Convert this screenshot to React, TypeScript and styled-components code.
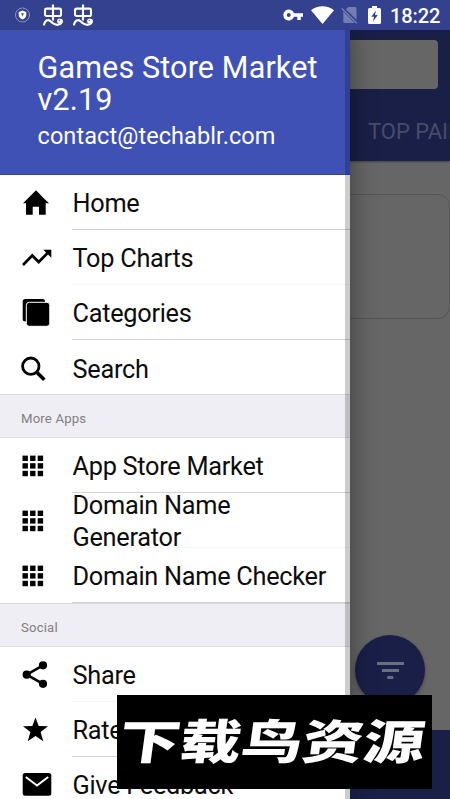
import React from "react";
import styled, { createGlobalStyle } from "styled-components";

const GlobalStyle = createGlobalStyle`
  * { box-sizing: border-box; }
  body { margin: 0; background: #666; overflow: hidden; }
`;

const Screen = styled.div`
  position: relative;
  width: 450px;
  height: 799px;
  overflow: hidden;
  background: #666;
  font-family: Roboto, "Noto Sans", sans-serif;
  display: flex;
  flex-direction: column;
`;

const StatusBar = styled.header`
  display: flex;
  align-items: center;
  justify-content: space-between;
  flex: none;
  height: 30px;
  padding: 0 10px 0 14px;
  background: #34418f;
  color: #fff;
`;
const StatusGroup = styled.div`
  display: flex;
  align-items: center;
`;
const StatusIcon = styled.svg<{ $gap?: number }>`
  display: block;
  flex: none;
  margin-right: ${(p) => p.$gap ?? 0}px;
`;
const Clock = styled.span`
  font-size: 20px;
  line-height: 30px;
  font-weight: 500;
  width: 50px;
  letter-spacing: -0.1px;
  white-space: nowrap;
  padding-top: 1px;
`;

const Toolbar = styled.div`
  flex: none;
  height: 131px;
  background: #191f47;
  display: flex;
  flex-direction: column;
  align-items: flex-end;
  justify-content: space-between;
  padding: 10px 0 0;
  box-shadow: 0 1px 2px rgba(0, 0, 0, 0.35);
`;
const SearchField = styled.div`
  width: 426px;
  height: 49px;
  margin-right: 12px;
  border-radius: 4px;
  background: #666;
`;
const Tab = styled.div`
  width: 82px;
  height: 60px;
  line-height: 62px;
  font-size: 22px;
  color: #474c6c;
  white-space: nowrap;
  overflow: hidden;
`;
const Content = styled.main`
  flex: 1;
  padding: 33px 0 0;
`;
const Card = styled.div`
  height: 125px;
  border: 1px solid #545454;
  border-radius: 12px;
`;
const BottomBar = styled.footer`
  flex: none;
  height: 69px;
  background: #191f47;
`;
const Fab = styled.button`
  position: absolute;
  left: 355px;
  top: 635px;
  width: 70px;
  height: 70px;
  padding: 0;
  border: 0;
  border-radius: 50%;
  background: #191f47;
  box-shadow: 0 2px 4px rgba(0, 0, 0, 0.3);
`;

const Drawer = styled.aside`
  position: absolute;
  left: 0;
  top: 30px;
  width: 350px;
  height: 769px;
  background: #fff;
  box-shadow: 0 0 24px rgba(0, 0, 0, 0.42);
  clip-path: inset(0 -40px 0 0);
`;
const DrawerEdge = styled.div`
  position: absolute;
  inset: 0 0 0 auto;
  width: 5px;
  background: rgba(0, 0, 0, 0.2);
`;
const DrawerHeader = styled.div`
  height: 145px;
  padding: 22px 0 0 37.5px;
  background: #3f51b5;
  border-bottom: 1px solid #34439c;
  color: #fff;
`;
const Title = styled.h1`
  margin: 0;
  font-size: 30.5px;
  font-weight: 400;
  line-height: 31.5px;
  letter-spacing: 0.15px;
`;
const Email = styled.p`
  margin: 7px 0 0;
  font-size: 23.5px;
  line-height: 28px;
  letter-spacing: 0.08px;
`;
const Section = styled.h2<{ $h: number }>`
  margin: 0;
  height: ${(p) => p.$h}px;
  padding-left: 21px;
  font-size: 13.2px;
  font-weight: 400;
  line-height: 47px;
  letter-spacing: 0.15px;
  color: #808080;
  background: #efeef5;
  border-top: 1px solid #d9d9dc;
  border-bottom: 1px solid #dedee2;
`;
const Row = styled.div<{ $h: number }>`
  display: flex;
  height: ${(p) => p.$h}px;
  padding-left: 20px;
`;
const RowIcon = styled.svg`
  flex: none;
  width: 32px;
  height: 32px;
  margin: 11px 20px 0 0;
`;
const RowLabel = styled.div<{ $line: string; $dy: number }>`
  flex: 1;
  display: flex;
  align-items: center;
  padding-top: ${(p) => p.$dy}px;
  padding-left: 0.5px;
  font-size: 25.3px;
  line-height: 32px;
  letter-spacing: -0.27px;
  color: #0c0c0c;
  border-bottom: 1px solid ${(p) => p.$line};
`;
const LabelText = styled.span<{ $wrap?: boolean }>`
  max-width: ${(p) => (p.$wrap ? "200px" : "none")};
  white-space: ${(p) => (p.$wrap ? "normal" : "nowrap")};
`;

const Banner = styled.div`
  position: absolute;
  left: 117px;
  top: 695px;
  width: 315px;
  height: 94px;
  background: #000;
  color: #fff;
  display: flex;
  align-items: center;
  justify-content: center;
  overflow: hidden;
`;
const BannerText = styled.span`
  font-family: "Noto Sans CJK SC", sans-serif;
  font-weight: 900;
  font-size: 47px;
  line-height: 94px;
  white-space: nowrap;
  transform: translate(-2px, -3px) scaleX(1.3) skewX(-6deg);
`;

type IconName = "home" | "trend" | "stack" | "search" | "grid" | "share" | "star" | "mail";

const drawings: Record<IconName, React.ReactNode> = {
  home: <path d="M16 4.3 3 17.3h3v11.4h6.7v-8H19v8h6.7V17.3h3.4L24 12.4z" />,
  trend: (
    <>
      <path d="m3 24 9.2-9.5 6.5 6.5 9.5-9.6" fill="none" stroke="#000" strokeWidth="2.7" />
      <path d="M23.3 8.8h8v8z" />
    </>
  ),
  stack: (
    <>
      <rect x="2.7" y="3" width="22.3" height="22.5" rx="2.5" />
      <rect x="6.3" y="6.3" width="23.5" height="24" rx="3" stroke="#fff" strokeWidth="1" />
    </>
  ),
  search: (
    <g fill="none" stroke="#000" strokeWidth="2.8">
      <circle cx="10.8" cy="15.2" r="8.2" />
      <path d="m16.3 20.7 8 8" strokeWidth="3.6" />
    </g>
  ),
  grid: (
    <>
      {[0, 1, 2].flatMap((r) =>
        [0, 1, 2].map((c) => (
          <rect key={`${r}${c}`} x={2.5 + c * 7.6} y={6.6 + r * 7.6} width="5.4" height="5.4" />
        ))
      )}
    </>
  ),
  share: (
    <>
      <path d="M23 7.3 6.7 16.7 23 25.8" fill="none" stroke="#000" strokeWidth="2.6" />
      <circle cx="23" cy="7.3" r="4.1" />
      <circle cx="6.7" cy="16.7" r="4.1" />
      <circle cx="23" cy="25.8" r="4.1" />
    </>
  ),
  star: <path d="m15.5 4.5 3.2 8.6 9.3.2-7.4 5.6 2.7 9.4-7.8-5.4-7.8 5.4 2.7-9.4L3 13.3l9.3-.2z" />,
  mail: (
    <>
      <rect x="2.7" y="5" width="28.6" height="22.8" rx="2.5" />
      <path d="m5.8 9 11.2 8.6L28.2 9" fill="none" stroke="#fff" strokeWidth="2" />
    </>
  ),
};

interface ItemProps {
  icon: IconName;
  label: string;
  h?: number;
  line?: string;
  dy?: number;
  wrap?: boolean;
}
const STRONG = "#d2d2d2";
const FAINT = "#f6f6f6";

function Item({ icon, label, h = 55, line = STRONG, dy = 3, wrap }: ItemProps) {
  return (
    <Row $h={h}>
      <RowIcon viewBox="0 0 32 32">{drawings[icon]}</RowIcon>
      <RowLabel $line={line} $dy={dy}>
        <LabelText $wrap={wrap}>{label}</LabelText>
      </RowLabel>
    </Row>
  );
}

function BugLogo({ gap }: { gap: number }) {
  return (
    <StatusIcon width="20" height="22" viewBox="0 0 20 22" $gap={gap}>
      <g fill="none" stroke="#fff" strokeWidth="2.1" strokeLinecap="round" strokeLinejoin="round">
        <rect x="2" y="4.6" width="16" height="7.4" rx="1.6" />
        <path d="M10 1.2v14.6" />
        <path d="M1 20.6C2 16.6 4.800 14.800 7.500 17.200 9.600 19.200 11.500 20.900 14.500 20.700" />
        <path d="M14.500 20.700C18 20.700 19.200 18.500 18.700 16.200" />
      </g>
      <circle cx="16.700" cy="17" r="2.600" fill="#fff" />
      <circle cx="16.300" cy="16.500" r="0.800" fill="#6f79b3" />
    </StatusIcon>
  );
}

export default function App() {
  return (
    <Screen>
      <GlobalStyle />
      <StatusBar>
        <StatusGroup>
          <StatusIcon width="17" height="16" viewBox="0 0 17 16" $gap={12}>
            <circle cx="8.5" cy="8" r="7" fill="none" stroke="#8d96c4" strokeWidth="1" />
            <path d="M8.5 3.6 12.3 5v3c0 2-1.6 3.6-3.8 4.5C6.3 11.6 4.7 10 4.7 8V5z" fill="#fff" />
            <path d="M7.2 6.3h2.600L8.5 9.500z" fill="#34418f" />
          </StatusIcon>
          <BugLogo gap={10} />
          <BugLogo gap={0} />
        </StatusGroup>
        <StatusGroup>
          <StatusIcon width="20" height="12" viewBox="0 0 20 12" $gap={8}>
            <path
              d="M11 4.3a5.5 5.5 0 1 0 0 3.4h3.3V11h3.5V7.7H20V4.3zM5.7 8a2 2 0 1 1 0-4 2 2 0 0 1 0 4z"
              fill="#fff"
              fillRule="evenodd"
            />
          </StatusIcon>
          <StatusIcon width="23" height="18" viewBox="0 0 23 18" $gap={7}>
            <path d="M0 4.2C6.5-1.1 16.5-1.1 23 4.2L11.5 18z" fill="#fff" />
          </StatusIcon>
          <StatusIcon width="17" height="18" viewBox="0 0 17 18" $gap={10}>
            <path d="M7.3 1H14q1.5 0 1.5 1.5v11.3L4.8 3.3zM2.3 5.6 13.6 17H4q-1.7 0-1.7-1.5z" fill="#737db3" />
            <path d="m.6 2.2 15.2 15" stroke="#737db3" strokeWidth="1.4" />
          </StatusIcon>
          <StatusIcon width="13" height="18" viewBox="0 0 13 18" $gap={9}>
            <path d="M4 0h5v2h2.5Q13 2 13 3.5v13q0 1.5-1.5 1.5h-10Q0 18 0 16.5v-13Q0 2 1.5 2H4z" fill="#fff" />
            <path d="M8 4.5 3.3 10.8h2.8L5 15.5l4.8-6.4H7z" fill="#34418f" />
          </StatusIcon>
          <Clock>18:22</Clock>
        </StatusGroup>
      </StatusBar>
      <Toolbar>
        <SearchField />
        <Tab>TOP PAID</Tab>
      </Toolbar>
      <Content>
        <Card />
      </Content>
      <BottomBar />
      <Fab aria-label="Filter">
        <svg width="70" height="70" viewBox="0 0 70 70">
          <path d="M22 27h27v3H22zM27 34h17v3H27zM32.3 41h6v3h-6z" fill="#6b6e80" />
        </svg>
      </Fab>
      <Drawer>
        <DrawerHeader>
          <Title>
            Games Store Market
            <br />
            v2.19
          </Title>
          <Email>contact@techablr.com</Email>
        </DrawerHeader>
        <Item icon="home" label="Home" />
        <Item icon="trend" label="Top Charts" line={FAINT} />
        <Item icon="stack" label="Categories" />
        <Item icon="search" label="Search" h={54} line="transparent" dy={6} />
        <Section $h={44}>More Apps</Section>
        <Item icon="grid" label="App Store Market" />
        <Item icon="grid" label="Domain Name Generator" line={FAINT} wrap />
        <Item icon="grid" label="Domain Name Checker" />
        <Section $h={44}>Social</Section>
        <Item icon="share" label="Share" line={FAINT} />
        <Item icon="star" label="Rate Us" />
        <Item icon="mail" label="Give Feedback" line={FAINT} />
        <DrawerEdge />
      </Drawer>
      <Banner>
        <BannerText>下载鸟资源</BannerText>
      </Banner>
    </Screen>
  );
}
